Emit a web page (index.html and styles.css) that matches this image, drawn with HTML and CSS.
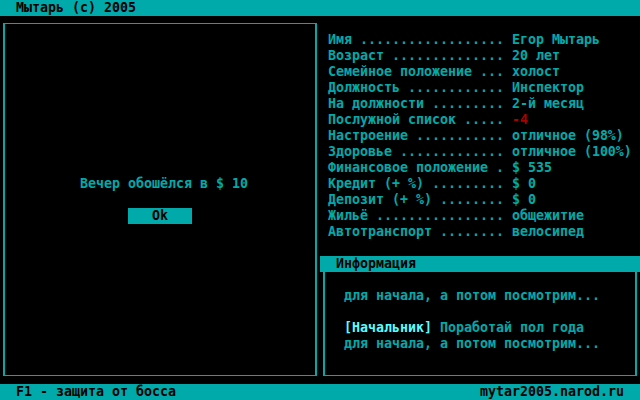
FILE: index.html
```html
<!DOCTYPE html>
<html lang="ru">
<head>
<meta charset="utf-8">
<title>Мытарь (с) 2005</title>
<link rel="stylesheet" href="styles.css">
</head>
<body>
<div class="screen">
  <header class="bar top-bar"><span class="txt">Мытарь (с) 2005</span></header>
  <main class="main">
    <section class="panel left-panel">
      <div class="msg">Вечер обошёлся в $ 10</div>
      <div class="btn">   Ok   </div>
    </section>
    <section class="right">
      <div class="stats">
        <div class="row"><span class="lbl">Имя .................. </span><span class="val">Егор Мытарь</span></div>
        <div class="row"><span class="lbl">Возраст .............. </span><span class="val">20 лет</span></div>
        <div class="row"><span class="lbl">Семейное положение ... </span><span class="val">холост</span></div>
        <div class="row"><span class="lbl">Должность ............ </span><span class="val">Инспектор</span></div>
        <div class="row"><span class="lbl">На должности ......... </span><span class="val">2-й месяц</span></div>
        <div class="row"><span class="lbl">Послужной список ..... </span><span class="val neg">-4</span></div>
        <div class="row"><span class="lbl">Настроение ........... </span><span class="val">отличное (98%)</span></div>
        <div class="row"><span class="lbl">Здоровье ............. </span><span class="val">отличное (100%)</span></div>
        <div class="row"><span class="lbl">Финансовое положение . </span><span class="val">$ 535</span></div>
        <div class="row"><span class="lbl">Кредит (+ %) ......... </span><span class="val">$ 0</span></div>
        <div class="row"><span class="lbl">Депозит (+ %) ........ </span><span class="val">$ 0</span></div>
        <div class="row"><span class="lbl">Жильё ................ </span><span class="val">общежитие</span></div>
        <div class="row"><span class="lbl">Автотранспорт ........ </span><span class="val">велосипед</span></div>
      </div>
      <div class="info-title">Информация</div>
      <div class="panel info-box">
        <div class="line">для начала, а потом посмотрим...</div>
        <div class="line"> </div>
        <div class="line"><span class="who">[Начальник]</span> Поработай пол года</div>
        <div class="line">для начала, а потом посмотрим...</div>
      </div>
    </section>
  </main>
  <footer class="bar bottom-bar"><span class="txt">F1 - защита от босса</span><span class="txt">mytar2005.narod.ru</span></footer>
</div>
</body>
</html>
```

FILE: styles.css
```css
* { box-sizing: border-box; margin: 0; padding: 0; }

html, body {
  background: #000;
}

body {
  margin: 0;
  width: 640px;
  height: 400px;
  overflow: hidden;
  font-family: "DejaVu Sans Mono", "Liberation Mono", monospace;
  font-size: 13.29px;
  font-weight: bold;
  line-height: 16px;
  color: #00aaaa;
}

.txt, .msg, .btn, .row, .line, .info-title {
  white-space: pre;
}

.screen {
  width: 640px;
  height: 400px;
  display: grid;
  grid-template-rows: 16px 368px 16px;
}

.bar {
  background: #00aaaa;
  color: #000;
  height: 16px;
  padding: 0 16px;
}

.bottom-bar {
  display: flex;
  justify-content: space-between;
}

.main {
  display: grid;
  grid-template-columns: 320px 320px;
  height: 368px;
}

.panel {
  border-style: solid;
  border-color: #00aaaa;
}

.left-panel {
  margin: 7px 3px 8px 3px;
  border-width: 1px 2px 1px 2px;
  display: flex;
  flex-direction: column;
  align-items: flex-start;
  padding: 152px 0 0 75px;
}

.btn {
  margin: 16px 0 0 48px;
  background: #00aaaa;
  color: #000;
  width: 64px;
}

.right {
  display: flex;
  flex-direction: column;
}

.stats {
  padding: 16px 0 0 8px;
  height: 240px;
}

.row { height: 16px; }

.neg { color: #aa0000; }

.info-title {
  background: #00aaaa;
  color: #000;
  height: 16px;
  padding-left: 16px;
}

.info-box {
  margin: 0 3px 8px 3px;
  border-width: 0 2px 1px 2px;
  height: 104px;
  padding: 16px 0 0 19px;
}

.line { height: 16px; }

.who { color: #55ffff; }
```
